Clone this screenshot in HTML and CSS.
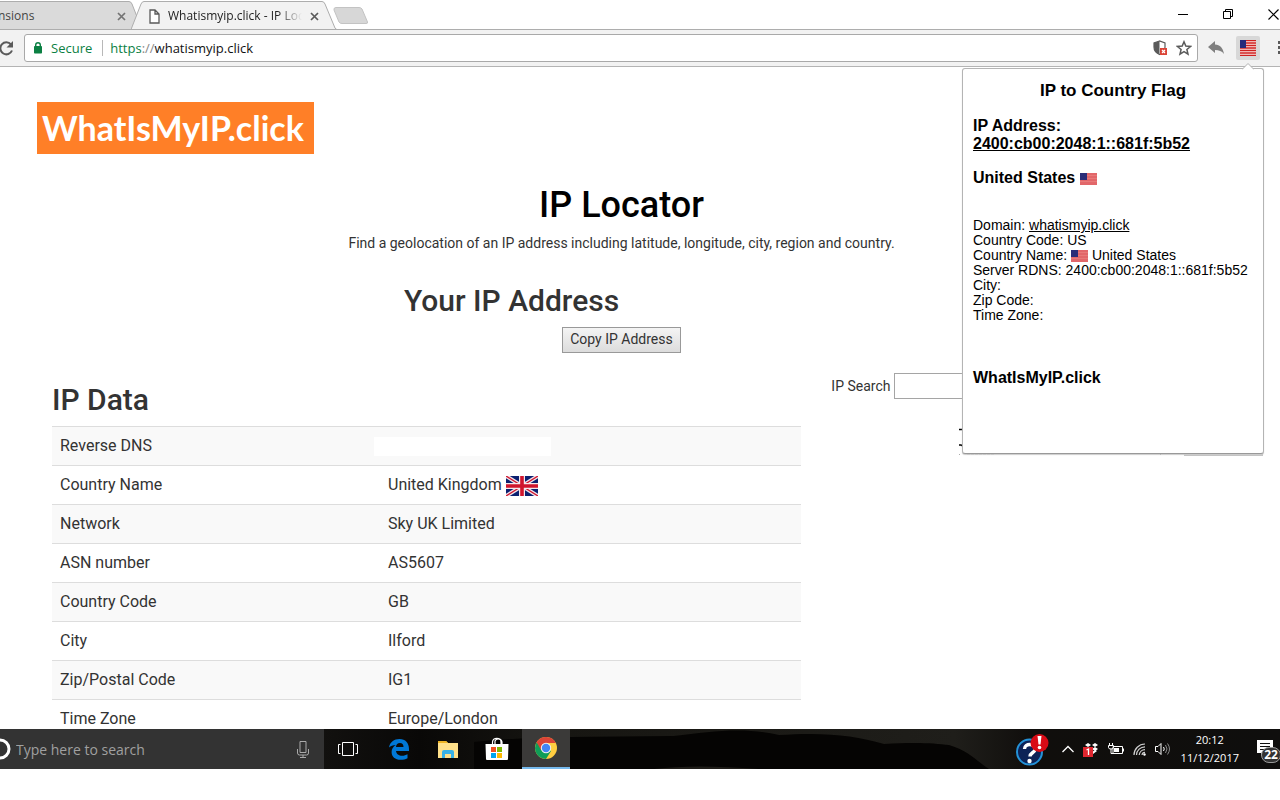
FILE: index.html
```html
<!DOCTYPE html>
<html lang="en">
<head>
  <meta charset="UTF-8">
  <meta name="viewport" content="width=device-width, initial-scale=1.0">
  <title>Whatismyip.click - IP Locator</title>
  <link rel="stylesheet" href="styles.css">
</head>
<body>
  <!-- Shared flag -->
  <svg class="defs" aria-hidden="true">
    <symbol id="us-flag" viewBox="0 0 17 12" preserveAspectRatio="none">
      <rect width="17" height="12" fill="#e2676a"/>
      <path d="M0 2.5h17M0 5.5h17M0 8.5h17" stroke="#e87a79" stroke-width="1"/>
      <rect width="7" height="7" fill="#2b2d78"/>
    </symbol>
  </svg>

  <header class="browser">
    <div class="tab-strip">
      <div class="tab tab-back">
        <svg class="tab-shape" viewBox="0 0 144 30" preserveAspectRatio="none"><path d="M0 1.5H129Q131 1.5 132 4L142 29.5H0" fill="#dadada" stroke="#adadad"/></svg>
        <span class="tab-title">nsions</span>
        <button class="tab-close" aria-label="Close tab"><svg width="9" height="9" viewBox="0 0 9 9"><path d="M1 1l7 7M8 1L1 8" stroke="#737373" stroke-width="1.7"/></svg></button>
      </div>
      <div class="tab tab-active">
        <svg class="tab-shape" viewBox="0 0 206 30" preserveAspectRatio="none"><path d="M0 29.500L10 4Q11 1.500 13 1.500H191Q193 1.500 194 4L204 28Q205 29.500 206 29.500V31H0Z" fill="#f2f2f2" stroke="#adadad"/></svg>
        <svg width="11" height="15" viewBox="0 0 11 15"><path d="M1 1h5l4 4v9H1zM6 1v4h4" fill="#fff" stroke="#5a5a5a" stroke-width="1.300"/></svg>
        <span class="tab-title">Whatismyip.click - IP Loc</span>
        <button class="tab-close" aria-label="Close tab"><svg width="9" height="9" viewBox="0 0 9 9"><path d="M1 1l7 7M8 1L1 8" stroke="#5a5a5a" stroke-width="1.7"/></svg></button>
      </div>
      <button class="new-tab" aria-label="New tab"><svg width="36" height="18" viewBox="0 0 36 18"><path d="M3 .5H26Q28 .5 29 2L34.500 15Q35 16.500 33 16.500H9Q7 16.500 6 15L1 3Q.5 .5 3 .5Z" fill="#d7d7d7" stroke="#c3c3c3"/></svg></button>
      <div class="window-buttons">
        <button aria-label="Minimize"><svg width="11" height="11" viewBox="0 0 11 11"><path d="M0 5.500h10" stroke="#000"/></svg></button>
        <button aria-label="Restore"><svg width="11" height="11" viewBox="0 0 11 11"><path d="M.5 2.500h7v7h-7zM2.500 2.500V.5h7v7h-2" fill="none" stroke="#000"/></svg></button>
        <button aria-label="Close"><svg width="11" height="11" viewBox="0 0 11 11"><path d="M.5 .5l10 10M10.500 .5l-10 10" stroke="#000" stroke-width="1.200"/></svg></button>
      </div>
    </div>

    <div class="toolbar">
      <button class="reload" aria-label="Reload"><svg width="16" height="16" viewBox="0 0 16 16"><path d="M13 4.500A6 6 0 1 0 14 10.500" fill="none" stroke="#5a5a5a" stroke-width="2"/><path d="M15 1v6.500H8.500z" fill="#5a5a5a"/></svg></button>
      <div class="address-bar">
        <svg width="10" height="12" viewBox="0 0 10 12"><rect x="1" y="4" width="8" height="7.500" rx=".8" fill="#0b8043"/><path d="M2.700 5V3a2.300 2.300 0 0 1 4.600 0v2" fill="none" stroke="#0b8043" stroke-width="1.400"/></svg>
        <span class="secure">Secure</span>
        <span class="url"><span class="scheme">https</span><span class="slashes">://</span>whatismyip.click</span>
        <button class="shield" aria-label="Content blocked"><svg width="15" height="16" viewBox="0 0 15 16"><path d="M6.500 1L1 3v4c0 3.500 2 6 5.500 7.500C10 13 12 10.500 12 7V3z" fill="#fff" stroke="#5a5a5a" stroke-width="1.200"/><path d="M6.500 1L1 3v4c0 3.500 2 6 5.500 7.500z" fill="#5a5a5a"/><rect x="7" y="8" width="7" height="7" fill="#db4437"/><path d="M9 10l3 3M12 10l-3 3" stroke="#fff" stroke-width="1.200"/></svg></button>
        <button class="star" aria-label="Bookmark this page"><svg width="16" height="16" viewBox="0 0 16 16"><path d="M8 1.800l1.800 4.300 4.700.4-3.600 3 1.100 4.600L8 11.700l-4 2.400 1.100-4.600-3.600-3 4.700-.4z" fill="none" stroke="#5a5a5a" stroke-width="1.500"/></svg></button>
      </div>
      <button class="reply" aria-label="Back"><svg width="16" height="14" viewBox="0 0 16 14"><path d="M7 0v3.500c5 .3 8 3.500 9 9.500-2.300-3-5-4-9-4V12L0 6z" fill="#808080"/></svg></button>
      <button class="flag-button" aria-label="IP to Country Flag">
        <svg width="16" height="16" viewBox="0 0 16 16"><rect width="16" height="16" fill="#fbe9e6"/><path d="M0 .5h16M0 3h16M0 5.500h16M0 8h16M0 10.500h16M0 13h16M0 15.500h16" stroke="#cf2020" stroke-width="1.300"/><rect width="6" height="8" fill="#262a7b"/></svg>
      </button>
      <button class="menu" aria-label="Menu"><svg width="4" height="14" viewBox="0 0 4 14" fill="#5a5a5a"><path d="M0 0h3v3H0zM0 5h3v3H0zM0 10h3v3H0z"/></svg></button>
    </div>

    <!-- Extension popup -->
    <aside class="popup">
      <svg class="popup-arrow" width="12" height="7" viewBox="0 0 12 7"><path d="M0 6.500L6 .5l6 6" fill="#fff" stroke="#b0b0b0"/></svg>
      <h3 class="popup-title">IP to Country Flag</h3>
      <p class="popup-ip">IP Address:<br><a href="#">2400:cb00:2048:1::681f:5b52</a></p>
      <p class="popup-country">United States <svg class="flag" width="17" height="12"><use href="#us-flag"/></svg></p>
      <div class="popup-details">
        Domain: <a href="#">whatismyip.click</a><br>
        Country Code: US<br>
        Country Name: <svg class="flag" width="17" height="12"><use href="#us-flag"/></svg> United States<br>
        Server RDNS: 2400:cb00:2048:1::681f:5b52<br>
        City:<br>
        Zip Code:<br>
        Time Zone:
      </div>
      <p class="popup-site">WhatIsMyIP.click</p>
    </aside>
  </header>

  <main class="page">
    <a class="logo" href="#">WhatIsMyIP.click</a>
    <section class="intro">
      <h1>IP Locator</h1>
      <p>Find a geolocation of an IP address including latitude, longitude, city, region and country.</p>
      <h2 class="your-ip">Your IP Address</h2>
      <button class="copy">Copy IP Address</button>
    </section>

    <div class="columns">
      <section class="ip-data">
        <h2>IP Data</h2>
        <table>
          <tr><th scope="row">Reverse DNS</th><td><div class="blank"></div></td></tr>
          <tr><th scope="row">Country Name</th><td>United Kingdom
            <svg class="uk" width="32" height="20" viewBox="0 0 32 20"><rect width="32" height="20" fill="#0b2070"/><path d="M0 0l32 20M32 0L0 20" stroke="#f1e4ea" stroke-width="4"/><path d="M0 0l32 20M32 0L0 20" stroke="#d0142c" stroke-width="1.300"/><path d="M16 0v20M0 10h32" stroke="#f4e8ec" stroke-width="6"/><path d="M16 0v20M0 10h32" stroke="#d0142c" stroke-width="3.600"/></svg></td></tr>
          <tr><th scope="row">Network</th><td>Sky UK Limited</td></tr>
          <tr><th scope="row">ASN number</th><td>AS5607</td></tr>
          <tr><th scope="row">Country Code</th><td>GB</td></tr>
          <tr><th scope="row">City</th><td>Ilford</td></tr>
          <tr><th scope="row">Zip/Postal Code</th><td>IG1</td></tr>
          <tr><th scope="row">Time Zone</th><td>Europe/London</td></tr>
        </table>
      </section>
      <section class="search">
        <label for="ip">IP Search</label>
        <input id="ip" type="text">
        <!-- strip that shows at the popup's edges -->
        <svg class="ad" width="304" height="28" viewBox="0 0 304 28"><path d="M0 1.500h3M0 17h2l2 1" stroke="#000" stroke-width="1.500" fill="none"/><path d="M201.500 24v3" stroke="#000"/><path d="M0 26.500h1M8 26.500h27" stroke="#aaa" stroke-dasharray="3 1"/><path d="M225 27h79" stroke="#c4c4c4" stroke-width="2"/></svg>
      </section>
    </div>
  </main>

  <footer class="taskbar">
    <svg class="wallpaper" viewBox="0 0 956 40" preserveAspectRatio="none">
      <defs><linearGradient id="glow"><stop offset="0" stop-color="#12110f"/><stop offset=".1" stop-color="#090807"/><stop offset=".25" stop-color="#171612"/><stop offset=".66" stop-color="#1f1e1a"/><stop offset=".74" stop-color="#100e0c"/><stop offset="1" stop-color="#0f0e0d"/></linearGradient></defs>
      <rect width="956" height="40" fill="url(#glow)"/>
      <path d="M150 40V13Q200 8 246 8L350 7C390 2 420-2 455 6C500 3 530 6 560 15C590 13 610 14 625 16C645 22 650 30 665 40Z" fill="#050403"/>
      <path d="M330 40Q370 35 435 40Z" fill="#1f1d19"/>
    </svg>
    <div class="cortana">
      <svg class="cortana-ring" width="11" height="22" viewBox="0 0 11 22"><circle cx="0" cy="11" r="9" fill="none" stroke="#fff" stroke-width="3"/></svg>
      <input type="text" aria-label="Search Windows" placeholder="Type here to search">
      <button aria-label="Voice search"><svg width="12" height="17" viewBox="0 0 12 17"><path d="M3 .5h6v11H3zM.5 8v4q0 2 2 2h7q2 0 2-2V8M6 14v2M3 16.500h6" fill="none" stroke="#aaa"/></svg></button>
    </div>
    <nav class="apps">
      <button class="task-view" aria-label="Task View"><svg width="20" height="14" viewBox="0 0 20 14"><path d="M4.500 .5h11v13h-11zM2.500 2.500h-2v9h2M17.500 2.500h2v9h-2" fill="none" stroke="#fff"/></svg></button>
      <button aria-label="Edge"><svg width="22" height="22" viewBox="0 0 22 22"><path d="M1 9.500C2 4 6 1 11.500 1 17.500 1 21 5 21 11v2H8c.3 3.200 3 4.700 6 4.700 2.200 0 4-.6 5.500-1.500v4c-2 1.100-4.200 1.600-6.800 1.600C7 21.800 3.600 18.700 3.600 14c0-3 1.600-5.600 4.200-7C5 7.100 2.500 8 1 9.500zM8 9h7.500c0-2.500-1.300-3.900-3.600-3.900C9.600 5.100 8.200 6.500 8 9z" fill="#0078d7"/></svg></button>
      <button aria-label="File Explorer"><svg width="22" height="19" viewBox="0 0 22 19"><path d="M1 1h8l2 2h10v15H1z" fill="#ffe08a"/><path d="M1 1h8l2 2H1z" fill="#eeb424"/><path d="M5 18v-6q0-2 2-2h8q2 0 2 2v6h-3v-4H8v4z" fill="#39b2e6"/></svg></button>
      <button aria-label="Store"><svg width="24" height="24" viewBox="0 0 24 24"><path d="M7.500 7V5c0-5 8.500-5 8.500 0v2M10 7V4c1-3 6-3 7 1v2" fill="none" stroke="#fff" stroke-width="1.200"/><path d="M.5 7h23L23 22q0 1-1 1H2q-1 0-1-1z" fill="#fff"/><path d="M6 10h5v5H6z" fill="#f25022"/><path d="M12 10h5v5h-5z" fill="#7fba00"/><path d="M6 16h5v5H6z" fill="#00a4ef"/><path d="M12 16h5v5h-5z" fill="#ffb900"/></svg></button>
      <button class="running" aria-label="Google Chrome"><svg width="22" height="22" viewBox="0 0 22 22"><circle cx="11" cy="11" r="11" fill="#ffcd40"/><path d="M11 11L1.500 5.500A11 11 0 0 0 11 22l5-8z" fill="#0f9d58"/><path d="M11 6h9.800A11 11 0 0 0 1.600 5.300L6.300 13.500z" fill="#db4437"/><circle cx="11" cy="11" r="5.200" fill="#f1f1f1"/><circle cx="11" cy="11" r="4.200" fill="#4285f4"/></svg></button>
    </nav>
    <div class="tray">
      <svg class="help" width="33" height="34" viewBox="0 0 33 34"><circle cx="13.500" cy="20" r="12.500" fill="#0d2357" stroke="#2492d8" stroke-width="2"/><path d="M8.500 17c0-6 10.500-6 10.500 0 0 4-5 3.500-5 7.500" fill="none" stroke="#fff" stroke-width="3.400"/><circle cx="13.500" cy="29" r="2.200" fill="#fff"/><circle cx="23.500" cy="11" r="9" fill="#d80b16"/><path d="M21.500 4h4l-1 8.500h-2z" fill="#fff"/><circle cx="23.500" cy="15.500" r="1.800" fill="#fff"/></svg>
      <svg width="12" height="8" viewBox="0 0 12 8"><path d="M.5 7L6 1.500 11.500 7" fill="none" stroke="#fff" stroke-width="1.300"/></svg>
      <svg width="16" height="15" viewBox="0 0 16 15"><path d="M5 1l3 2-3 2-3-2zM12 1l3 2-3 2-3-2zM5 5l3 2-3 2-3-2zM12 5l3 2-3 2-3-2zM9 10l3-2 2 1-4 3z" fill="#fff"/><rect y="5" width="10" height="10" fill="#e0262f"/><path d="M3.500 8L5.500 7v6" fill="none" stroke="#fff" stroke-width="1.300"/></svg>
      <svg width="16" height="13" viewBox="0 0 16 13"><path d="M5 3.500h9.500v7H5zM15.500 5.500v3M1.500 0v3M4.500 0v3M.5 2.500h5v2q0 1.500-2.500 1.500t-2.500-1.500zM3 6v4.500h2" fill="none" stroke="#fff"/><path d="M6 5h5v4H6z" fill="#fff"/></svg>
      <svg width="13" height="13" viewBox="0 0 13 13"><path d="M1 12A11 11 0 0 1 12 1M3.500 12A8.500 8.500 0 0 1 12 3.800M6.200 12A6 6 0 0 1 12 6.600M9 12a3 3 0 0 1 3-2.600" fill="none" stroke="#d0d0d0" stroke-width="1.200"/><circle cx="11.500" cy="11.500" r="1.200" fill="#fff"/></svg>
      <svg width="17" height="14" viewBox="0 0 17 14"><path d="M.5 4.500H3l3-3v11l-3-3H.5zM8.500 5q1.500 2 0 4" fill="none" stroke="#fff"/><path d="M10.500 3q3 4 0 8M12.500 1.500q4 5.500 0 11" fill="none" stroke="#8a8a8a"/></svg>
      <div class="clock"><span>20:12</span><span>11/12/2017</span></div>
      <div class="notifications">
        <svg width="17" height="16" viewBox="0 0 17 16"><path d="M0 0h16v13H8l-4 3v-3H0z" fill="#fff"/><path d="M3 3.500h10M3 6.500h10M3 9.500h7" stroke="#111"/></svg>
        <span class="count">22</span>
      </div>
    </div>
  </footer>
</body>
</html>
```
FILE: styles.css
```css
* {
  box-sizing: border-box;
}

body {
  display: flex;
  flex-direction: column;
  height: 100vh;
  margin: 0;
  padding-bottom: 31px;
  overflow: hidden;
  background-color: #fff;
  color: #333;
  font-family: Roboto, sans-serif;
  font-size: 14px;
  line-height: 20px;
}

h1, h2, h3, p {
  margin: 0;
}

svg {
  flex: none;
}

button {
  padding: 0;
  border: none;
  background: none;
  line-height: 0;
  cursor: pointer;
}

.defs {
  position: absolute;
  width: 0;
  height: 0;
}

/* Browser */
.browser {
  position: relative;
  z-index: 1;
  font-family: "Open Sans", sans-serif;
}

.tab-strip {
  display: flex;
  height: 30px;
  border-bottom: 1px solid #adadad;
}

.tab {
  position: relative;
  display: flex;
  align-items: center;
  height: 30px;
  padding-top: 2px;
  color: #444;
  font-size: 12px;
}

.tab-back {
  width: 144px;
  padding-right: 18px;
}

.tab-back .tab-title {
  margin-left: -2px;
}

.tab-active {
  width: 206px;
  margin-left: -13px;
  padding-left: 18px;
  padding-right: 18px;
  gap: 8px;
  color: #222;
}

.tab-shape {
  position: absolute;
  z-index: -1;
  left: 0;
  top: 0;
  width: 100%;
  height: 100%;
}

.tab-title {
  flex: 1;
  white-space: nowrap;
}

.tab-active .tab-title {
  min-width: 0;
  mask-image: linear-gradient(to right, #000 82%, transparent);
}

.new-tab {
  margin: 2px 0 0 -4px;
}

.window-buttons {
  display: flex;
  gap: 34px;
  margin-left: auto;
  padding-right: 1px;
}

.toolbar {
  display: flex;
  align-items: center;
  height: 37px;
  border-bottom: 1px solid #b4b4b4;
  background-color: #f2f2f2;
}

.reload {
  margin-left: -2px;
}

.address-bar {
  display: flex;
  flex: 1;
  align-items: center;
  height: 28px;
  margin-left: 10px;
  padding: 0 5px 0 8px;
  border: 1px solid #a9a9a9;
  border-radius: 3px;
  background-color: #fff;
  color: #111;
  font-size: 13px;
}

.secure {
  margin: 0 10px 0 8px;
  color: #0b8043;
}

.url {
  flex: 1;
  padding-left: 7px;
  border-left: 1px solid #b8b8b8;
  line-height: 16px;
}

.scheme {
  color: #0b8043;
}

.slashes {
  color: #888;
}

.star {
  margin-left: 8px;
}

.reply {
  margin-left: 10px;
}

.flag-button {
  width: 24px;
  height: 24px;
  margin-left: 12px;
  border-radius: 2px;
  background-color: #d8d8d8;
}

.menu {
  width: 2px;
  margin-left: 18px;
  overflow: hidden;
}

/* Popup */
.popup {
  position: absolute;
  top: 68px;
  right: 16px;
  width: 302px;
  height: 386px;
  padding: 13px 10px;
  border: 1px solid #b4b4b4;
  border-bottom-color: #999;
  border-radius: 3px;
  background-color: #fff;
  box-shadow: 0 1px 1px #ccc;
  color: #000;
  font-family: "Liberation Sans", Arial, sans-serif;
  font-size: 14px;
  line-height: 15px;
}

.popup a {
  color: #000;
}

.popup-arrow {
  position: absolute;
  top: -6px;
  right: 9px;
}

.popup-title,
.popup-ip,
.popup-country,
.popup-site {
  font-size: 16px;
  font-weight: bold;
  line-height: 18px;
}

.popup-title {
  text-align: center;
  font-size: 17px;
}

.popup-ip {
  margin-top: 17px;
}

.popup-country {
  margin-top: 16px;
}

.popup-details {
  margin-top: 31px;
}

.popup-site {
  margin-top: 46px;
}

.flag {
  height: 12px;
  vertical-align: -2px;
}

/* Page */
.page {
  flex: 1;
  min-height: 0;
  padding: 35px 74px 0 37px;
  overflow: hidden;
}

.logo {
  display: block;
  width: fit-content;
  padding: 6px 10px 6px 5px;
  background-color: #ff7f27;
  color: #fff;
  font-family: Lato, sans-serif;
  font-size: 34px;
  font-weight: bold;
  line-height: 40px;
  text-decoration: none;
}

.intro {
  padding-top: 31px;
  text-align: center;
}

h1 {
  margin-bottom: 8px;
  color: #000;
  font-size: 36px;
  font-weight: 500;
  line-height: 40px;
}

h2 {
  font-size: 30px;
  font-weight: 500;
  line-height: 33px;
}

.your-ip {
  margin: 31px 0 10px;
  padding-right: 220px;
}

.copy {
  height: 26px;
  padding: 0 7px 2px;
  border: 1px solid #999;
  background: linear-gradient(#f4f4f4, #dcdcdc);
  color: #333;
  font-family: inherit;
  font-size: 14px;
}

.columns {
  display: grid;
  grid-template-columns: minmax(0, 2fr) minmax(0, 1fr);
  margin-top: 20px;
}

.ip-data {
  padding: 10px 15px;
}

.search {
  padding: 0 15px;
}

.search input {
  width: 170px;
  height: 26px;
  border: 1px solid #a5a5a5;
}

.ad {
  display: block;
  margin: 29px 0 0 128px;
}

table {
  width: 100%;
  margin-top: 10px;
  border-collapse: separate;
  border-spacing: 0;
  font-size: 16px;
  line-height: 22px;
}

th,
td {
  padding: 8px;
  border-top: 1px solid #ddd;
  font-weight: normal;
  text-align: left;
}

th {
  width: 328px;
}

tr:nth-child(odd) {
  background-color: #f9f9f9;
}

.blank {
  width: 177px;
  height: 19px;
  margin-left: -14px;
  background-color: #fff;
}

.uk {
  margin: -2px 0;
  vertical-align: -4px;
}

/* Taskbar */
.taskbar {
  position: relative;
  display: flex;
  height: 40px;
  background-color: #080706;
  color: #fff;
  font-family: "Open Sans", sans-serif;
}

.wallpaper {
  position: absolute;
  right: 0;
  width: calc(100% - 324px);
  height: 40px;
}

.cortana {
  display: flex;
  align-items: center;
  width: 324px;
  padding-right: 15px;
  background-color: #333;
}

.cortana input {
  flex: 1;
  min-width: 0;
  padding: 0 5px;
  border: none;
  background: none;
  font-family: inherit;
  font-size: 14px;
}

.cortana input::placeholder {
  color: #a0a0a0;
}

.apps {
  position: relative;
  display: flex;
  gap: 1px;
}

.apps button {
  width: 48px;
}

.task-view {
  margin-right: 2px;
}

.apps .running {
  border-bottom: 2px solid #76b9ed;
  background-color: #3b3a39;
}

.tray {
  position: relative;
  display: flex;
  align-items: center;
  gap: 9px;
  margin-left: auto;
}

.help {
  margin-right: 4px;
}

.clock {
  display: flex;
  flex-direction: column;
  align-items: center;
  font-size: 11px;
  line-height: 18px;
}

.notifications {
  position: relative;
  margin-left: 9px;
  width: 23px;
  height: 18px;
  line-height: 0;
}

.count {
  position: absolute;
  left: 4px;
  top: 7px;
  width: 20px;
  border: 1px solid #999;
  border-radius: 8px;
  background-color: #333;
  font-size: 12px;
  font-weight: bold;
  line-height: 14px;
  text-align: center;
}
```
